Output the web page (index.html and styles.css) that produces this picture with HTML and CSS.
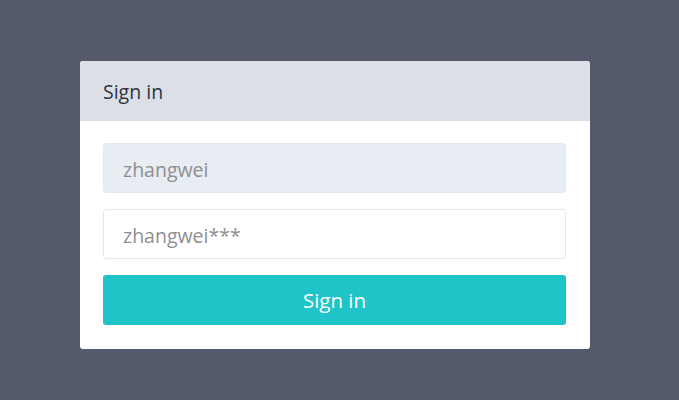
FILE: index.html
```html
<!DOCTYPE html>
<html lang="en">
<head>
    <meta charset="UTF-8">
    <meta name="viewport" content="width=device-width, initial-scale=1.0">
    <title>Sign in</title>
    <link rel="stylesheet" href="styles.css">
</head>
<body>
    <!-- Login Card -->
    <div class="login-card">
        <div class="login-header">Sign in</div>
        <form class="login-body">
            <input type="text" class="field field-filled" value="zhangwei">
            <input type="text" class="field" value="zhangwei***">
            <button type="button" class="btn-signin">Sign in</button>
        </form>
    </div>
</body>
</html>
```

FILE: styles.css
```css
/* General Styling */
body {
    font-family: 'Open Sans', sans-serif;
    margin: 0;
    padding: 0;
    background: #545a6c;
    height: 400px;
}

/* Login Card */
.login-card {
    width: 510px;
    margin: 61px 0 0 80px;
    background: #ffffff;
    border-radius: 3px;
    overflow: hidden;
}

.login-header {
    height: 60px;
    line-height: 61px;
    padding: 0 23px;
    background: #dcdfe6;
    color: #2f3440;
    font-size: 19.5px;
}

.login-body {
    display: flex;
    flex-direction: column;
    gap: 16px;
    padding: 22px 24px 24px 23px;
    margin: 0;
}

.field {
    box-sizing: border-box;
    height: 50px;
    padding: 2px 19px 0;
    border: 1px solid #e6e8ec;
    border-radius: 3px;
    background: #ffffff;
    font-family: 'Open Sans', sans-serif;
    font-size: 19.5px;
    color: #8f8f8f;
    outline: none;
}

.field-filled {
    background: #e8ecf3;
}

.btn-signin {
    height: 50px;
    border: none;
    border-radius: 3px;
    background: #1fc4c8;
    color: #ffffff;
    font-family: 'Open Sans', sans-serif;
    font-size: 20.5px;
    cursor: pointer;
}
```
